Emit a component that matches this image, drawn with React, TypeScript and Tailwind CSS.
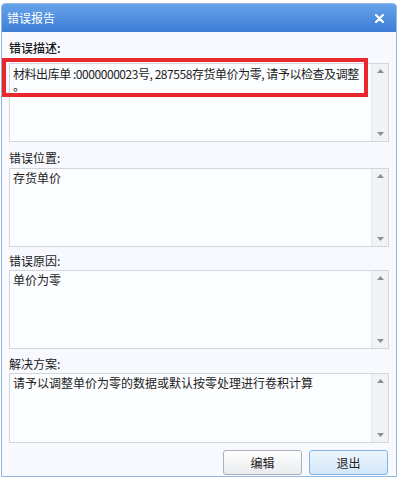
import { ReactNode } from "react"

const font = { fontFamily: '"Noto Sans CJK SC", "Liberation Sans", sans-serif' }

const Scrollbar = () => (
    <div className="w-[17px] shrink-0 border-l border-[#e3e6ea] bg-[#f1f2f4] flex flex-col items-center justify-between py-[5px]">
        <svg width="7" height="4" viewBox="0 0 7 4"><path d="M0 4 L3.5 0 L7 4 Z" fill="#8a8f96" /></svg>
        <svg width="7" height="4" viewBox="0 0 7 4"><path d="M0 0 L3.5 4 L7 0 Z" fill="#8a8f96" /></svg>
    </div>
)

const Field = ({ label, children, height, labelGap, textPad, className = "" }: { label: string; children: ReactNode; height: string; labelGap: string; textPad: string; className?: string }) => (
    <div className={className}>
        <div className={`text-[12px] leading-[16px] text-[#1a1a1a] ${labelGap}`}>{label}</div>
        <div className={`flex border border-[#d3d7dd] bg-[#fcfdff] ${height}`}>
            <div className={`flex-1 min-w-0 pl-[3px] text-[12px] leading-[13px] text-[#222] ${textPad}`}>{children}</div>
            <Scrollbar />
        </div>
    </div>
)

export default function App() {
    return (
        <div className="w-[400px] h-[480px] bg-white relative overflow-hidden" style={font}>
            <div className="ml-[1px] mt-[3px] w-[396px] h-[474px] border border-[#93b8e4] rounded-t-[4px] bg-[#f7f9fe] flex flex-col">
                {/* title bar */}
                <div className="h-[28px] shrink-0 flex items-center justify-between pl-[5px] pr-[12px] rounded-t-[3px] bg-gradient-to-b from-[#66a3ea] to-[#3c7dd6]">
                    <span className="text-[12px] text-white">错误报告</span>
                    <svg width="9" height="9" viewBox="0 0 9 9"><path d="M1 1 L8 8 M8 1 L1 8" stroke="white" strokeWidth="2.2" strokeLinecap="round" /></svg>
                </div>

                <div className="px-[7px] pt-[8px] flex flex-col">
                    <Field label="错误描述:" height="h-[79px]" labelGap="mb-[7px]" textPad="pt-[4px]" className="font-medium">
                        <div className="font-normal whitespace-nowrap tracking-[-0.45px] leading-[12px]">材料出库单 :0000000023号, 287558存货单价为零, 请予以检查及调整</div>
                        <div className="font-normal leading-[11px]">。</div>
                    </Field>
                    <Field label="错误位置:" height="h-[79px]" labelGap="mb-[2px]" textPad="pt-[2px]" className="mt-[8px]">
                        存货单价
                    </Field>
                    <Field label="错误原因:" height="h-[79px]" labelGap="mb-[1px]" textPad="pt-[2px]" className="mt-[6px]">
                        单价为零
                    </Field>
                    <Field label="解决方案:" height="h-[70px]" labelGap="mb-[1px]" textPad="pt-[2px]" className="mt-[7px]">
                        请予以调整单价为零的数据或默认按零处理进行卷积计算
                    </Field>

                    <div className="flex justify-end gap-[7px] mt-[7px] pr-[1px]">
                        <button className="w-[79px] h-[25px] rounded-[3px] border border-[#a9afb8] bg-gradient-to-b from-[#ffffff] to-[#e9ebee] text-[12px] text-[#222]">编辑</button>
                        <button className="w-[79px] h-[25px] rounded-[3px] border border-[#80b5ea] bg-gradient-to-b from-[#eef6fd] to-[#d2e6f8] text-[12px] text-[#222]">退出</button>
                    </div>
                </div>
            </div>

            {/* red annotation box */}
            <div className="absolute left-[2px] top-[58px] w-[366px] h-[39px] border-[4px] border-[#e8282c] pointer-events-none" />
        </div>
    )
}
